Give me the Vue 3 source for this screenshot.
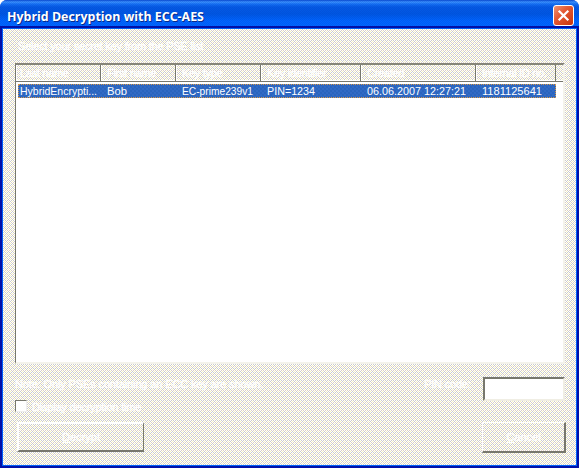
<script setup>
const columns = [
  { title: 'Last name', value: 'HybridEncrypti...', w: 77 },
  { title: 'First name', value: 'Bob', w: 20 },
  { title: 'Key type', value: 'EC-prime239v1', w: 71 },
  { title: 'Key identifier', value: 'PIN=1234', w: 48 },
  { title: 'Created', value: '06.06.2007 12:27:21', w: 99 },
  { title: 'Internal ID no.', value: '1181125641', w: 60 },
]
</script>

<template>
  <div class="window">
    <header class="titlebar">
      <h1>Hybrid Decryption with ECC-AES</h1>
      <button class="close" aria-label="Close">
        <svg width="21" height="21" viewBox="0 0 21 21">
          <defs>
            <linearGradient id="red" x1="0" y1="0" x2="1" y2="1">
              <stop offset="0" stop-color="#f09878" />
              <stop offset=".4" stop-color="#e45a35" />
              <stop offset="1" stop-color="#c93208" />
            </linearGradient>
          </defs>
          <rect x=".5" y=".5" width="20" height="20" rx="2.5" fill="url(#red)" stroke="#fff" />
          <path d="M5.7 5.7 15.3 15.3M15.3 5.7 5.7 15.3" stroke="#fff" stroke-width="2.2" />
        </svg>
      </button>
    </header>
    <main class="body dither">
      <p class="prompt ghost">Select your secret key from the PSE list</p>
      <section class="list">
        <div class="row head dither">
          <div v-for="c in columns" :key="c.title" class="cell ghost">{{ c.title }}</div>
          <div class="rest"></div>
        </div>
        <div class="row selected">
          <div v-for="c in columns" :key="c.title" class="cell">
            <svg width="100%" height="15"><text x="0" y="11" :textLength="c.w" lengthAdjust="spacingAndGlyphs">{{ c.value }}</text></svg>
          </div>
        </div>
      </section>
      <div class="note-row">
        <p class="note ghost">Note: Only PSEs containing an ECC key are shown.</p>
        <label class="pin ghost">PIN code:</label>
        <input class="pin-input" type="password" />
      </div>
      <div class="check-row">
        <span class="box"></span>
        <span class="check-label ghost">Display decryption time</span>
      </div>
      <div class="buttons">
        <button class="btn decrypt ghost"><span><u>D</u>ecrypt</span></button>
        <button class="btn cancel ghost"><span><u>C</u>ancel</span></button>
      </div>
    </main>
  </div>
</template>

<style>
body { margin: 0; background: #fff; overflow: hidden; }
</style>

<style scoped>
* { box-sizing: border-box; }
p, h1 { margin: 0; }
.window {
  width: 579px;
  height: 468px;
  display: flex;
  flex-direction: column;
  font: 11px/13px "Liberation Sans", Arial, sans-serif;
  background: #0040e0;
  border-radius: 7px 7px 0 0;
  overflow: hidden;
}
.dither {
  background: #fff url("data:image/svg+xml,%3Csvg xmlns='http://www.w3.org/2000/svg' width='4' height='4' shape-rendering='crispEdges'%3E%3Cpath fill='%23ccc' d='M2 0h1v1H2zM0 2h1v1H0zM1 3h1v1H1zM3 3h1v1H3z'/%3E%3Cpath fill='%23f4f2bc' d='M0 0h1v1H0zM2 2h1v1H2z'/%3E%3Cpath fill='%23dccfc6' d='M1 1h1v1H1zM3 1h1v1H3z'/%3E%3C/svg%3E") 0 0 / 4px 4px;
}
.body.dither { background-position: 1px 0; }
.titlebar {
  height: 29px;
  flex: none;
  display: flex;
  justify-content: space-between;
  padding: 5px 5px 0 7px;
  background:
    repeating-conic-gradient(rgba(0, 40, 180, .16) 0 25%, transparent 0 50%) 0 0 / 2px 2px,
    linear-gradient(#0849d0 0, #3d95ff 2px, #1673f5 4px, #055ae4 7px, #0058e2 14px, #0066ff 21px, #0068ff 26px, #0045cc 29px);
}
h1 {
  font: bold 13px/22px "Open Sans", "Noto Sans", sans-serif;
  color: #fff;
  text-shadow: 1px 1px 0 #0a2a88;
  white-space: nowrap;
  transform: scaleX(.955);
  transform-origin: 0 0;
}
.close { width: 21px; height: 21px; padding: 0; border: 0; background: none; }
.close svg { display: block; }
.body {
  flex: 1;
  display: flex;
  flex-direction: column;
  margin: 0 3px 3px;
  padding: 10px 11px 0 12px;
  box-shadow: 0 0 0 1px #0060f8, 0 0 0 3px #0010a8;
}
.ghost { color: #fff; white-space: nowrap; -webkit-text-stroke: .3px #fff; }
.prompt { height: 24px; padding: 1px 0 0 3px; letter-spacing: -.2px; }
.list {
  height: 301px;
  flex: none;
  background: #fff;
  border: 2px solid;
  border-color: #858579 #f4f3eb #f4f3eb #77776d;
  border-left-width: 1px;
}
.row { display: grid; grid-template-columns: 85px 75px 85px 100px 115px 80px 1fr; }
.head {
  height: 17px;
  border-bottom: 1px solid #77776d;
  box-shadow: 0 -1px #fff inset;
}
.head .cell {
  padding: 2px 0 0 5px;
  letter-spacing: -.3px;
  border-right: 1px solid #77776d;
  border-left: 1px solid #fff;
}
.head .cell:first-child { padding-left: 3px; }
.selected {
  width: 538px;
  height: 14px;
  margin: 2px 0 0 2px;
  grid-template-columns: 87px 75px 85px 100px 115px 76px;
  color: #fff;
  background:
    repeating-conic-gradient(rgba(20, 85, 165, .25) 0 25%, transparent 0 50%) 0 0 / 4px 4px,
    #316ac5;
  outline: 1px dotted #d89848;
  outline-offset: -1px;
}
.selected .cell { padding-left: 2px; }
.selected svg { display: block; fill: #fff; overflow: visible; }
.note-row { height: 35px; display: flex; align-items: flex-start; margin-top: 13px; }
.note { width: 410px; padding-top: 1px; letter-spacing: -.13px; }
.pin { width: 59px; padding-top: 1px; letter-spacing: -.2px; }
.pin-input {
  width: 82px;
  height: 24px;
  margin: 0;
  padding: 0;
  background: #fff;
  border: 2px solid;
  border-color: #77776d #f0eee4 #f0eee4 #77776d;
  border-radius: 0;
}
.check-row { display: flex; gap: 5px; margin-top: -12px; height: 22px; }
.check-label { padding-top: 1px; letter-spacing: -.2px; }
.box {
  width: 12px;
  height: 12px;
  background: #fff;
  border: 1px solid;
  border-color: #77776d #eee #eee #77776d;
}
.buttons { display: flex; justify-content: space-between; align-items: flex-start; padding-left: 2px; margin-right: -1px; }
.btn {
  height: 30px;
  padding: 0;
  font: inherit;
  background: none;
  border: 2px solid;
  border-color: #fff #77776d #77776d #fff;
}
.decrypt { width: 127px; border-right-width: 1px; }
.cancel { width: 84px; height: 31px; border-width: 1px 2px 2px 1px; }
</style>
